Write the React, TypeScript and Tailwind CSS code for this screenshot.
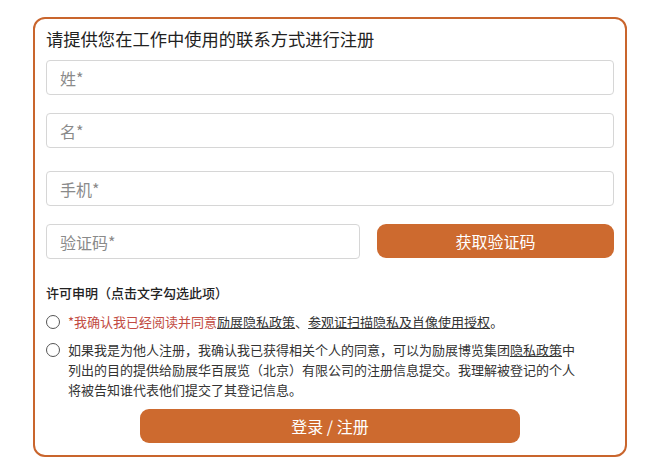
import React from "react";

const font = { fontFamily: '"Noto Sans CJK SC", "Noto Sans", sans-serif' };

function Field({ placeholder, className = "" }: { placeholder: string; className?: string }) {
  return (
    <input
      placeholder={placeholder}
      className={`h-[35px] w-full rounded-[4px] border border-[#d6d6d6] bg-white px-[13px] text-[16px] text-[#333] placeholder:text-[#8a8a8a] outline-none ${className}`}
    />
  );
}

function Radio() {
  return <span className="mt-[3px] block h-[14px] w-[14px] shrink-0 rounded-full border border-[#555]" />;
}

export default function App() {
  return (
    <div className="min-h-[467px] w-[650px] bg-white pl-[33px] pt-[17px]" style={font}>
      <div className="h-[440px] w-[594px] rounded-[12px] border-2 border-[#c9652d] px-[11px] pt-[8px]">
        <h1 className="text-[17.3px] leading-[24px] text-[#222]">请提供您在工作中使用的联系方式进行注册</h1>
        <div className="mt-[9px] flex flex-col">
          <Field placeholder="姓*" />
          <Field placeholder="名*" className="mt-[18px]" />
          <Field placeholder="手机*" className="mt-[23px]" />
          <div className="mt-[18px] flex gap-[17px]">
            <div className="w-[314px]">
              <Field placeholder="验证码*" />
            </div>
            <button className="h-[34px] flex-1 rounded-[9px] bg-[#cd6a2f] text-[16px] text-white">获取验证码</button>
          </div>
        </div>
        <p className="mt-[24px] text-[13px] font-medium leading-[20px] text-[#222]">许可申明（点击文字勾选此项）</p>
        <div className="mt-[9px] flex gap-[8px] text-[13px] leading-[20px]">
          <Radio />
          <p className="text-[#333]">
            <span className="text-[#c24b42]">*我确认我已经阅读并同意</span>
            <span className="underline">励展隐私政策</span>、<span className="underline">参观证扫描隐私及肖像使用授权</span>。
          </p>
        </div>
        <div className="mt-[8px] flex gap-[8px] text-[13px] leading-[20px]">
          <Radio />
          <p className="whitespace-nowrap text-[#333]">
            如果我是为他人注册，我确认我已获得相关个人的同意，可以为励展博览集团<span className="underline">隐私政策</span>中
            <br />
            列出的目的提供给励展华百展览（北京）有限公司的注册信息提交。我理解被登记的个人
            <br />
            将被告知谁代表他们提交了其登记信息。
          </p>
        </div>
        <div className="mt-[9px] flex justify-center">
          <button className="h-[34px] w-[380px] rounded-[9px] bg-[#cd6a2f] text-[16px] text-white">登录 / 注册</button>
        </div>
      </div>
    </div>
  );
}
